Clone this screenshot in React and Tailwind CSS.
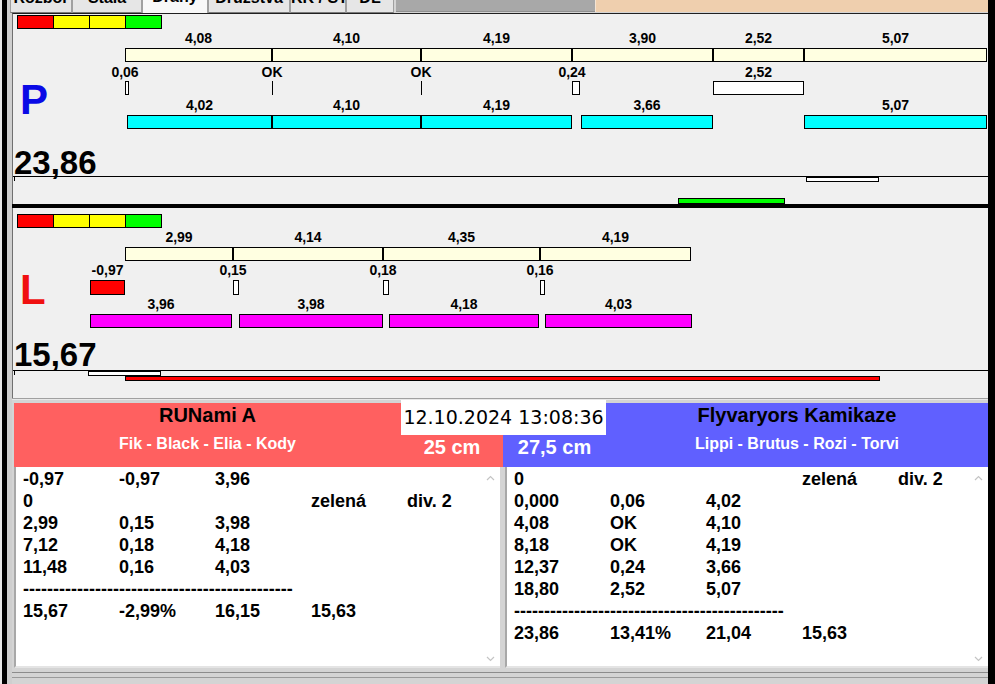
import React from "react";

const OX = 13;

const panelP = {
  top: [
    { v: "4,08", a: 125, b: 272 },
    { v: "4,10", a: 272, b: 421 },
    { v: "4,19", a: 421, b: 572 },
    { v: "3,90", a: 572, b: 713 },
    { v: "2,52", a: 713, b: 804 },
    { v: "5,07", a: 804, b: 987 },
  ],
  marks: [
    { v: "0,06", a: 125, b: 129, t: "box" },
    { v: "OK", a: 272, b: 273, t: "line" },
    { v: "OK", a: 421, b: 422, t: "line" },
    { v: "0,24", a: 572, b: 580, t: "box" },
    { v: "2,52", a: 713, b: 804, t: "box" },
  ],
  bottom: [
    { v: "4,02", a: 127, b: 272 },
    { v: "4,10", a: 272, b: 421 },
    { v: "4,19", a: 421, b: 572 },
    { v: "3,66", a: 581, b: 713 },
    { v: "5,07", a: 804, b: 987 },
  ],
};

const panelL = {
  top: [
    { v: "2,99", a: 125, b: 233 },
    { v: "4,14", a: 233, b: 383 },
    { v: "4,35", a: 383, b: 540 },
    { v: "4,19", a: 540, b: 691 },
  ],
  marks: [
    { v: "-0,97", a: 90, b: 125, t: "red" },
    { v: "0,15", a: 233, b: 239, t: "box" },
    { v: "0,18", a: 383, b: 389, t: "box" },
    { v: "0,16", a: 540, b: 545, t: "box" },
  ],
  bottom: [
    { v: "3,96", a: 90, b: 232 },
    { v: "3,98", a: 239, b: 383 },
    { v: "4,18", a: 389, b: 539 },
    { v: "4,03", a: 545, b: 692 },
  ],
};

const leftRows = [
  ["-0,97", "-0,97", "3,96", "", ""],
  ["0", "", "", "zelená", "div. 2"],
  ["2,99", "0,15", "3,98", "", ""],
  ["7,12", "0,18", "4,18", "", ""],
  ["11,48", "0,16", "4,03", "", ""],
  "dash",
  ["15,67", "-2,99%", "16,15", "15,63", ""],
];

const rightRows = [
  ["0", "", "", "zelená", "div. 2"],
  ["0,000", "0,06", "4,02", "", ""],
  ["4,08", "OK", "4,10", "", ""],
  ["8,18", "OK", "4,19", "", ""],
  ["12,37", "0,24", "3,66", "", ""],
  ["18,80", "2,52", "5,07", "", ""],
  "dash",
  ["23,86", "13,41%", "21,04", "15,63", ""],
];

const tabs = [
  { t: "Rozbor", w: 62 },
  { t: "Stála", w: 70 },
  { t: "Dráhy", w: 66, on: true },
  { t: "Družstva", w: 82 },
  { t: "KK / ST", w: 56 },
  { t: "DL", w: 48 },
];

function Labels({ items, pos = "mid", top }) {
  return items.map((it, i) => (
    <span
      key={i}
      className={`absolute -translate-x-1/2 text-[14px] font-bold leading-[14px] text-black whitespace-nowrap ${top}`}
      style={{ left: (pos === "start" && it.t !== "red" && it.b - it.a < 20 ? it.a : (it.a + it.b) / 2) - OX }}
    >
      {it.v}
    </span>
  ));
}

function Bars({ items, color }) {
  return items.map((it, i) => (
    <div
      key={i}
      className={`absolute top-0 h-full border border-black ${color}`}
      style={{ left: it.a - OX, width: it.b - it.a }}
    />
  ));
}

function Marks({ items }) {
  return items.map((it, i) => {
    if (it.t === "line")
      return <div key={i} className="absolute top-0 h-full w-px bg-black" style={{ left: it.a - OX }} />;
    return (
      <div
        key={i}
        className={`absolute top-0 h-full border border-black ${it.t === "red" ? "bg-[#ff0000]" : "bg-white"}`}
        style={{ left: it.a - OX, width: it.b - it.a }}
      />
    );
  });
}

function ColorBar() {
  return (
    <div className="flex h-[14px] w-[145px]">
      <div className="w-[37px] border border-black bg-[#ff0000]" />
      <div className="-ml-px w-[37px] border border-black bg-[#ffff00]" />
      <div className="-ml-px w-[37px] border border-black bg-[#ffff00]" />
      <div className="-ml-px w-[37px] border border-black bg-[#00ff00]" />
    </div>
  );
}

function ScrollArrows() {
  return (
    <div className="absolute right-[3px] top-0 bottom-0 flex w-[14px] flex-col items-center justify-between pb-[4px] pt-[8px]">
      <svg width="9" height="6" viewBox="0 0 9 6">
        <path d="M1 5 L4.5 1.5 L8 5" fill="none" stroke="#c4c4c4" strokeWidth="1.2" />
      </svg>
      <svg width="9" height="6" viewBox="0 0 9 6">
        <path d="M1 1 L4.5 4.5 L8 1" fill="none" stroke="#c4c4c4" strokeWidth="1.2" />
      </svg>
    </div>
  );
}

function List({ rows, className }) {
  return (
    <div className={`relative min-w-0 overflow-hidden bg-white ${className}`}>
      <div className="pl-[7px] pt-px text-[18px] font-bold leading-[22px] text-black">
        {rows.map((r, i) =>
          r === "dash" ? (
            <div key={i} className="h-[22px] whitespace-nowrap">
              {"-".repeat(45)}
            </div>
          ) : (
            <div key={i} className="grid h-[22px] grid-cols-[96px_96px_96px_96px_80px] whitespace-nowrap">
              {r.map((c, j) => (
                <span key={j}>{c}</span>
              ))}
            </div>
          )
        )}
      </div>
      <ScrollArrows />
    </div>
  );
}

export default function App() {
  return (
    <div className="flex h-[684px] w-[995px] overflow-hidden bg-[#d4d4d4] font-['Liberation_Sans',Arial,sans-serif]">
      {/* left window edge */}
      <div className="flex w-[12px] shrink-0">
        <div className="w-[2px] bg-[#e8e8e8]" />
        <div className="w-[5px] bg-black" />
        <div className="w-[5px] bg-[#cfcfcf]" />
      </div>

      <div className="flex w-[976px] min-w-0 shrink-0 flex-col">
        {/* tab strip, cut off at the top */}
        <div className="flex h-[13px] shrink-0 -ml-[2px]">
          {tabs.map((t) => (
            <div
              key={t.t}
              className={`h-[13px] shrink-0 overflow-hidden whitespace-nowrap border-x border-[#a0a0a0] text-center text-[16px] font-bold leading-[16px] text-black ${
                t.on ? "bg-[#f8f8f8]" : "bg-[#e6e6e6] border-b border-b-[#7a7a7a]"
              }`}
              style={{ width: t.w }}
            >
              <div className={t.on ? "-mt-[11px]" : "-mt-[10px]"}>{t.t}</div>
            </div>
          ))}
          <div className="ml-[2px] h-[12px] w-[199px] shrink-0 border-b border-[#909090] bg-[#a8a8a8]" />
          <div className="h-[12px] flex-1 border-l border-[#f4e4d4] bg-[#efcfae]" />
        </div>

        {/* P panel */}
        <div className="relative flex h-[191px] shrink-0 flex-col border-l border-t border-[#202020] border-l-[#707070] bg-[#f0f0f0]">
          <div className="h-px shrink-0" />
          <div className="pl-[4px]">
            <ColorBar />
          </div>
          <div className="relative h-[19px] shrink-0">
            <Labels items={panelP.top} top="top-[2px]" />
          </div>
          <div className="relative h-[14px] shrink-0">
            <Bars items={panelP.top} color="bg-[#ffffe1]" />
          </div>
          <div className="relative h-[19px] shrink-0">
            <Labels items={panelP.marks} pos="start" top="top-[3px]" />
          </div>
          <div className="relative h-[14px] shrink-0">
            <Marks items={panelP.marks} />
          </div>
          <div className="relative h-[20px] shrink-0">
            <Labels items={panelP.bottom} top="top-[3px]" />
          </div>
          <div className="relative h-[14px] shrink-0">
            <Bars items={panelP.bottom} color="bg-[#00ffff]" />
          </div>
          <div className="h-[47px] shrink-0 pl-[1px] pt-[17px] text-[33px] font-bold leading-[33px] text-black">23,86</div>
          <div className="relative h-[28px] shrink-0 border-t border-black">
            <div className="absolute left-[1px] top-0 h-[4px] w-px bg-black" />
            <div className="absolute left-[793px] top-0 h-[5px] w-[73px] border border-black bg-white" />
            <div className="absolute left-[665px] top-[21px] h-[6px] w-[107px] border border-black bg-[#00ff00]" />
          </div>
          <span className="absolute left-[7px] top-[65px] text-[42px] font-bold leading-[42px] text-[#0a0ae6]">P</span>
        </div>
        <div className="h-[4px] shrink-0 bg-black" />

        {/* L panel */}
        <div className="relative flex h-[190px] shrink-0 flex-col border-l border-[#707070] bg-[#f0f0f0]">
          <div className="h-[6px] shrink-0" />
          <div className="pl-[4px]">
            <ColorBar />
          </div>
          <div className="relative h-[19px] shrink-0">
            <Labels items={panelL.top} top="top-[2px]" />
          </div>
          <div className="relative h-[14px] shrink-0">
            <Bars items={panelL.top} color="bg-[#ffffe1]" />
          </div>
          <div className="relative h-[19px] shrink-0">
            <Labels items={panelL.marks} pos="start" top="top-[2px]" />
          </div>
          <div className="relative h-[15px] shrink-0">
            <Marks items={panelL.marks} />
          </div>
          <div className="relative h-[19px] shrink-0">
            <Labels items={panelL.bottom} top="top-[2px]" />
          </div>
          <div className="relative h-[14px] shrink-0">
            <Bars items={panelL.bottom} color="bg-[#ff00ff]" />
          </div>
          <div className="h-[42px] shrink-0 pl-[1px] pt-[10px] text-[33px] font-bold leading-[33px] text-black">15,67</div>
          <div className="relative h-[28px] shrink-0 border-t border-black">
            <div className="absolute left-[1px] top-0 h-[4px] w-px bg-black" />
            <div className="absolute left-[75px] top-0 h-[5px] w-[73px] border border-black bg-white" />
            <div className="absolute left-[112px] top-[5px] h-[5px] w-[755px] border border-black bg-[#ff0000]" />
          </div>
          <span className="absolute left-[7px] top-[61px] text-[42px] font-bold leading-[42px] text-[#f01010]">L</span>
        </div>
        <div className="h-px shrink-0 bg-[#a0a0a0]" />
        <div className="h-px shrink-0 bg-[#e8e8e8]" />

        {/* team headers */}
        <div className="flex h-[67px] shrink-0 pl-[2px]">
          <div className="mt-[3px] w-[387px] shrink-0 bg-[#ff6060] text-center">
            <div className="text-[20px] font-bold leading-[24px] text-black">RUNami A</div>
            <div className="mt-[7px] text-[16px] font-bold leading-[20px] text-white">Fik - Black - Elia - Kody</div>
          </div>
          <div className="flex w-[205px] shrink-0 flex-col">
            <div className="h-[35px] bg-white text-center font-['DejaVu_Sans',Verdana,sans-serif] text-[19px] leading-[34px] text-black">
              12.10.2024 13:08:36
            </div>
            <div className="flex flex-1">
              <div className="w-[102px] bg-[#ff6060] text-center text-[20px] font-bold leading-[25px] text-white">25 cm</div>
              <div className="flex-1 bg-[#6060ff] text-center text-[20px] font-bold leading-[25px] text-white">27,5 cm</div>
            </div>
          </div>
          <div className="mt-[3px] min-w-0 flex-1 bg-[#6060ff] text-center">
            <div className="text-[20px] font-bold leading-[24px] text-black">Flyvaryors Kamikaze</div>
            <div className="mt-[7px] text-[16px] font-bold leading-[20px] text-white">Lippi - Brutus - Rozi - Torvi</div>
          </div>
        </div>

        {/* result lists */}
        <div className="flex h-[201px] shrink-0 gap-[5px] pl-[2px]">
          <List rows={leftRows} className="w-[486px] shrink-0 border-l-2 border-b-2 border-[#a8a8a8] border-b-[#e4e4e4]" />
          <List rows={rightRows} className="flex-1 border-l-2 border-b-2 border-[#a8a8a8] border-b-[#e4e4e4]" />
        </div>
        <div className="mt-[4px] h-px shrink-0 bg-[#8c8c8c]" />
        <div className="mt-[4px] h-px shrink-0 bg-[#9a9a9a]" />
      </div>

      {/* right window edge */}
      <div className="w-[7px] shrink-0 bg-black" />
    </div>
  );
}
